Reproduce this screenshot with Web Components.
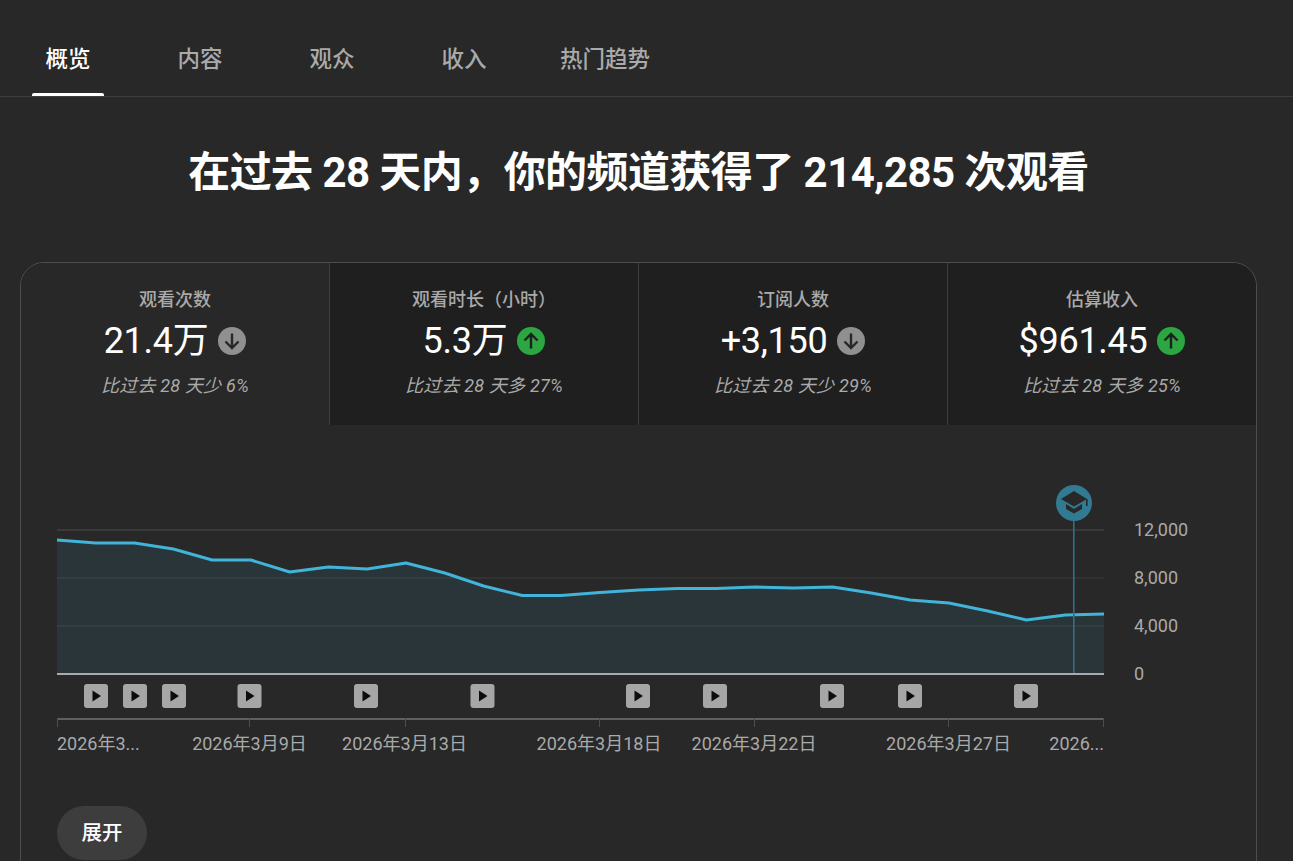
<!DOCTYPE html>
<html lang="zh-CN"><head><meta charset="utf-8"><title>概览</title>
<style>
html,body{margin:0;padding:0;background:#282828;height:861px;overflow:hidden;}
body{font-family:Roboto,"Noto Sans CJK SC",sans-serif;color:#fff;}
</style></head><body>
<yt-tabs>
  <yt-tab active>概览</yt-tab><yt-tab>内容</yt-tab><yt-tab>观众</yt-tab><yt-tab>收入</yt-tab><yt-tab>热门趋势</yt-tab>
</yt-tabs>
<yt-headline>在过去 28 天内，你的频道获得了 214,285 次观看</yt-headline>
<yt-card>
  <yt-metrics>
    <yt-metric selected label="观看次数" value="21.4万" dir="down" note="比过去 28 天少 6%"></yt-metric>
    <yt-metric label="观看时长（小时）" value="5.3万" dir="up" note="比过去 28 天多 27%"></yt-metric>
    <yt-metric label="订阅人数" value="+3,150" dir="down" note="比过去 28 天少 29%"></yt-metric>
    <yt-metric label="估算收入" value="$961.45" dir="up" note="比过去 28 天多 25%"></yt-metric>
  </yt-metrics>
  <yt-chart></yt-chart>
  <yt-button>展开</yt-button>
</yt-card>
<script>
function def(name, css, html){
  customElements.define(name, class extends HTMLElement{
    connectedCallback(){
      if(this.shadowRoot) return;
      const r=this.attachShadow({mode:'open'});
      r.innerHTML='<style>'+css+'</style>'+(typeof html==='function'?html(this):html);
    }
  });
}
const F='Roboto,"Noto Sans CJK SC",sans-serif';
def('yt-tabs',`:host{display:flex;gap:60px;height:96px;padding-left:32px;border-bottom:1px solid #3e3e3e;}`,'<slot></slot>');
def('yt-tab',`:host{display:flex;position:relative;align-items:center;justify-content:center;min-width:72px;height:96px;padding-top:22.500px;box-sizing:border-box;font:500 22.500px/30px ${F};color:#aaa;}
:host([active]){color:#fff;}
:host([active])::after{content:"";position:absolute;left:0;right:0;bottom:0;height:3px;background:#fff;border-radius:2px 2px 0 0;}`,'<slot></slot>');
def('yt-headline',`:host{display:block;width:1277px;text-align:center;font:700 42px/52px ${F};letter-spacing:-.56px;padding-top:50px;color:#fff;box-sizing:border-box;height:165px;}`,'<slot></slot>');
def('yt-card',`:host{display:block;margin:0 36px 0 20px;width:1237px;height:700px;box-sizing:border-box;border:1px solid #4d4d4d;border-radius:24px;overflow:hidden;}`,'<slot></slot>');
def('yt-metrics',`:host{display:grid;grid-template-columns:309px 309px 309px 308px;height:162px;}`,'<slot></slot>');
const arrow={up:'M12 19.500V5M5.500 11.500 12 5 18.500 11.500',down:'M12 4.500V19M5.500 12.500 12 19 18.500 12.500'};
def('yt-metric',`:host{display:flex;flex-direction:column;align-items:center;box-sizing:border-box;background:#1f1f1f;border-right:1px solid #3e3e3e;padding-top:26px;}
:host(:last-child){border-right:0;}
:host([selected]){background:#282828;}
.l{font:500 18px/22px ${F};color:#aaa;}
.v{display:flex;align-items:center;gap:10px;height:48px;margin-top:6px;font:400 36px/48px ${F};letter-spacing:-.3px;color:#fff;}
.i{width:28px;height:28px;border-radius:50%;display:flex;align-items:center;justify-content:center;}
.up{background:#2ba640;}.down{background:#909090;}
svg{width:24px;height:24px;display:block;fill:none;stroke:#1f1f1f;stroke-width:2.400;}
.down svg{stroke:#282828;}
.n{font:italic 400 18px/22px ${F};letter-spacing:.2px;color:#aaa;margin-top:10px;}`,
 h=>{const d=h.getAttribute('dir');return `<div class="l">${h.getAttribute('label')}</div><div class="v"><span>${h.getAttribute('value')}</span><span class="i ${d}"><svg viewBox="0 0 24 24"><path d="${arrow[d]}"/></svg></span></div><div class="n">${h.getAttribute('note')}</div>`;});
const ys=[540,543,543,549,560,560,572,567,569,563,573,586,595.500,595.500,592.500,590,588.500,588.500,587,588,587,593,600,603,611,620,615,614];
const OY=425,OX=21;
const pts=ys.map((y,i)=>[(57+i*1047/27-OX).toFixed(1),(y-OY).toFixed(1)]);
const line=pts.map(p=>p.join(',')).join(' ');
const vids=[96,135,174,249.500,366,482.500,638,715,832,910,1026];
const ticks=[57,249,405,599,754,948,1103];
const labels=[[57,'start','2026年3...'],[249.500,'middle','2026年3月9日'],[404.500,'middle','2026年3月13日'],[599,'middle','2026年3月18日'],[754,'middle','2026年3月22日'],[948.500,'middle','2026年3月27日'],[1104,'end','2026...']];
const grid=[[530,'12,000'],[578,'8,000'],[626,'4,000'],[674,'0']];
def('yt-chart',`:host{display:block;height:381px;}
svg{display:block;width:1235px;height:381px;font-family:${F};}
text{font-size:18px;fill:#aaa;}`,
()=>`<svg viewBox="0 0 1235 381">
${grid.slice(0,3).map(g=>`<rect x="36" y="${g[0]-OY-1}" width="1047" height="2" fill="${g[0]==530?'#3a3a3a':'#323232'}"/>`).join('')}
<polygon points="36,249 ${line} 1083,249" fill="#41b4d9" fill-opacity=".1"/>
<polyline points="${line}" fill="none" stroke="#41b4d9" stroke-width="3" stroke-linejoin="round"/>
<rect x="36" y="248" width="1047" height="2" fill="#aaa"/>
<rect x="1052" y="90" width="1.600" height="158" fill="#2f7088"/>
${grid.map(g=>`<text x="1113" y="${g[0]-OY+6.4}">${g[1]}</text>`).join('')}
<circle cx="1053" cy="78" r="18" fill="#327a92"/>
<path d="M1053 66 1040 74 1053 81.500 1066 74ZM1045 79 1053 84 1061 79V84L1053 88.500 1045 84Z" fill="#282828"/>
<rect x="1065" y="74" width="1.600" height="7" fill="#282828"/>
${vids.map(x=>`<g transform="translate(${x-OX-12},${684-OY})"><rect width="24" height="24" rx="3" fill="#a6a6a6"/><path d="M8.500 6.500 17 12 8.500 17.500Z" fill="#0d0d0d"/></g>`).join('')}
<rect x="36" y="293" width="1047" height="2" fill="#606060"/>
${ticks.map(x=>`<rect x="${x-OX}" y="293" width="1" height="9" fill="#4d4d4d"/>`).join('')}
${labels.map(l=>`<text x="${l[0]-OX}" y="325.400" text-anchor="${l[1]}">${l[2]}</text>`).join('')}
</svg>`);
def('yt-button',`:host{display:inline-flex;align-items:center;justify-content:center;margin-left:36px;width:90px;height:54px;border-radius:27px;background:#3d3d3d;color:#fff;font:500 20.500px/28px ${F};}`,'<slot></slot>');
</script>
</body></html>
